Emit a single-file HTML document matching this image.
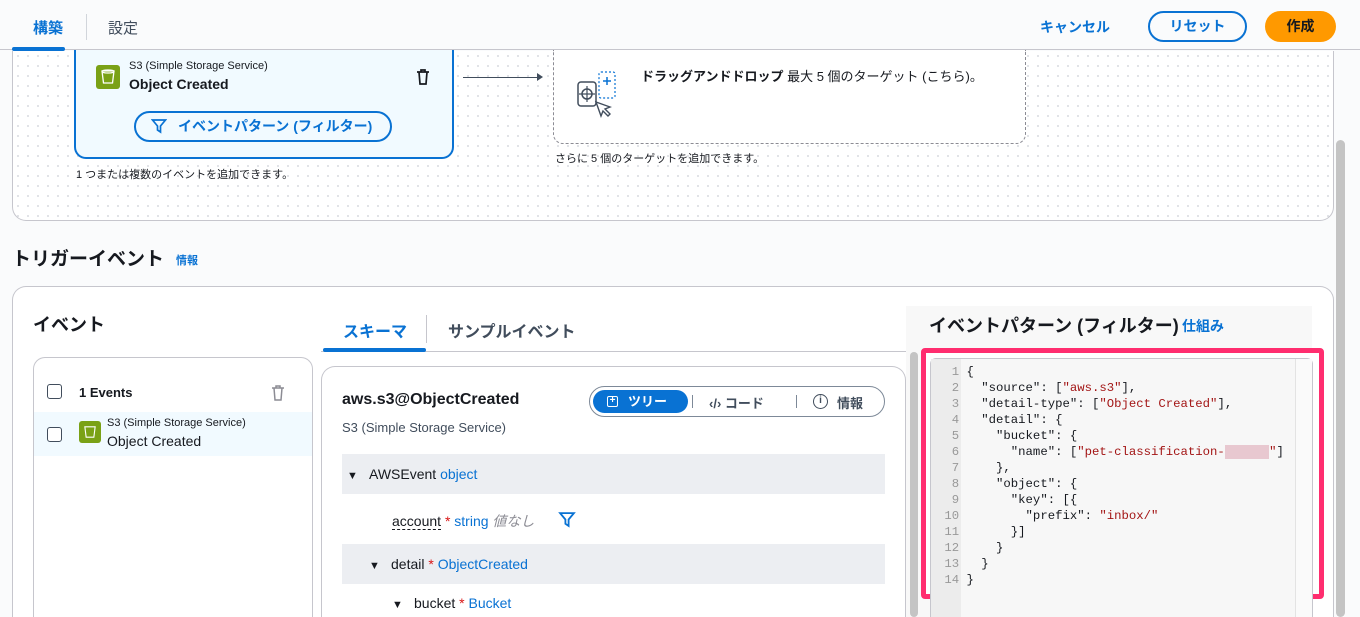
<!DOCTYPE html>
<html style="overflow:hidden;width:1360px;height:617px"><head><meta charset="utf-8"><style>
*{box-sizing:border-box;margin:0;padding:0}
body{width:1360px;height:617px;overflow:hidden;background:#fafbfc;font-family:"Liberation Sans","Noto Sans CJK JP",sans-serif;color:#16191f;position:relative;font-size:14px}
.a{position:absolute}
.blue{color:#0972d3}
.dots{background-image:radial-gradient(#dfe1e5 1px,transparent 1.2px);background-size:10px 10px}
.mono{font-family:"Liberation Mono","DejaVu Sans Mono",monospace}
.tri{font-size:11px;display:inline-block;width:22px}
</style></head><body>
<div class="a" style="left:0;top:0;width:1360px;height:50px;border-bottom:1px solid #c6c6cd;background:#fafbfc"></div>
<div class="a blue" style="left:33px;top:17px;font-size:15px;font-weight:bold">構築</div>
<div class="a" style="left:86px;top:14px;width:1px;height:26px;background:#d1d5db"></div>
<div class="a" style="left:108px;top:17px;font-size:15px;color:#414d5c">設定</div>
<div class="a" style="left:12px;top:47px;width:53px;height:4px;background:#0972d3;border-radius:2px"></div>
<div class="a blue" style="left:1040px;top:17px;font-size:14px;font-weight:bold">キャンセル</div>
<div class="a blue" style="left:1148px;top:11px;width:99px;height:31px;border:2px solid #0972d3;border-radius:16px;text-align:center;line-height:27px;font-weight:bold">リセット</div>
<div class="a" style="left:1265px;top:11px;width:71px;height:31px;background:#ff9900;border-radius:16px;text-align:center;line-height:31px;font-weight:bold">作成</div>
<div class="a" style="left:1336px;top:140px;width:9px;height:477px;background:#c4c4c4;border-radius:5px"></div>
<div class="a dots" style="left:12px;top:51px;width:1322px;height:170px;border:1px solid #c6c6cd;border-top:none;border-radius:0 0 14px 14px;background-color:#fff"></div>
<div class="a" style="left:74px;top:50px;width:380px;height:109px;background:#f1faff;border:2px solid #0972d3;border-top:none;border-radius:0 0 12px 12px"></div>
<div class="a" style="left:96px;top:65px;width:24px;height:24px;background:#7aa116;border-radius:3px"></div>
<svg class="a" style="left:101px;top:69px" width="14" height="16" viewBox="0 0 14 16"><path d="M1 2h12l-1.5 12h-9z" fill="none" stroke="#fff" stroke-width="1.3"/><ellipse cx="7" cy="2.5" rx="6" ry="1.5" fill="none" stroke="#fff" stroke-width="1.2"/></svg>
<div class="a" style="left:129px;top:60px;font-size:11px">S3 (Simple Storage Service)</div>
<div class="a" style="left:129px;top:76px;font-size:14px;font-weight:bold">Object Created</div>
<svg class="a" style="left:416px;top:69px" width="14" height="16" viewBox="0 0 14 16"><path d="M1 3h12M5 3V1h4v2M3 3l1 12h6l1-12" fill="none" stroke="#16191f" stroke-width="1.7"/></svg>
<div class="a blue" style="left:134px;top:111px;width:258px;height:31px;border:2px solid #0972d3;border-radius:16px;font-weight:bold;font-size:14px;line-height:27px;padding-left:42px">イベントパターン (フィルター)</div>
<svg class="a" style="left:151px;top:118px" width="16" height="16" viewBox="0 0 16 16"><path d="M1.5 2h13l-5 6v6l-3-2V8z" fill="none" stroke="#0972d3" stroke-width="1.7"/></svg>
<div class="a" style="left:76px;top:166px;font-size:11px;color:#16191f">1 つまたは複数のイベントを追加できます。</div>
<div class="a" style="left:463px;top:77px;width:78px;height:1px;background:#414d5c"></div>
<div class="a" style="left:537px;top:73px;border-left:6px solid #414d5c;border-top:4px solid transparent;border-bottom:4px solid transparent"></div>
<div class="a" style="left:553px;top:50px;width:473px;height:94px;border:1px dashed #8c8c94;border-top:none;border-radius:0 0 10px 10px;background:#fff"></div>
<svg class="a" style="left:576px;top:70px" width="52" height="50" viewBox="0 0 52 50"><rect x="2" y="12" width="18" height="24" rx="3" fill="none" stroke="#414d5c" stroke-width="1.5"/><circle cx="11" cy="24" r="5" fill="none" stroke="#414d5c" stroke-width="1.5"/><path d="M11 16v16M3 24h16" stroke="#414d5c" stroke-width="1.2"/><rect x="23" y="2" width="16" height="26" rx="2" fill="none" stroke="#0972d3" stroke-width="1.2" stroke-dasharray="2 2"/><path d="M31 7v8M27 11h8" stroke="#0972d3" stroke-width="1.5"/><path d="M20 32l5 14 2-5 5 5 2-2-5-5 5-2z" fill="#fff" stroke="#414d5c" stroke-width="1.4"/></svg>
<div class="a" style="left:641px;top:66px;font-size:13px"><b>ドラッグアンドドロップ</b> 最大 5 個のターゲット (こちら)。</div>
<div class="a" style="left:555px;top:150px;font-size:11px">さらに 5 個のターゲットを追加できます。</div>
<div class="a" style="left:12px;top:244px;font-size:19px;font-weight:bold">トリガーイベント</div>
<div class="a blue" style="left:176px;top:252px;font-size:11px;font-weight:bold">情報</div>
<div class="a" style="left:12px;top:286px;width:1322px;height:331px;border:1px solid #c6c6cd;border-bottom:none;border-radius:14px 14px 0 0;background:#fff"></div>
<div class="a" style="left:33px;top:311px;font-size:18px;font-weight:bold">イベント</div>
<div class="a" style="left:33px;top:357px;width:280px;height:260px;border:1px solid #c6c6cd;border-bottom:none;border-radius:12px 12px 0 0"></div>
<div class="a" style="left:47px;top:384px;width:15px;height:15px;border:1.5px solid #414d5c;border-radius:3px"></div>
<div class="a" style="left:79px;top:385px;font-size:13px;font-weight:bold">1 Events</div>
<svg class="a" style="left:271px;top:385px" width="14" height="16" viewBox="0 0 14 16"><path d="M1 3h12M5 3V1h4v2M3 3l1 12h6l1-12" fill="none" stroke="#8c8c94" stroke-width="1.5"/></svg>
<div class="a" style="left:34px;top:412px;width:278px;height:44px;background:#f1faff"></div>
<div class="a" style="left:47px;top:427px;width:15px;height:15px;border:1.5px solid #414d5c;border-radius:3px;background:#fff"></div>
<div class="a" style="left:79px;top:421px;width:22px;height:22px;background:#7aa116;border-radius:3px"></div>
<svg class="a" style="left:84px;top:425px" width="12" height="14" viewBox="0 0 14 16"><path d="M1 2h12l-1.5 12h-9z" fill="none" stroke="#fff" stroke-width="1.3"/></svg>
<div class="a" style="left:107px;top:417px;font-size:11px">S3 (Simple Storage Service)</div>
<div class="a" style="left:107px;top:433px;font-size:14px">Object Created</div>
<div class="a" style="left:321px;top:351px;width:585px;height:1px;background:#c6c6cd"></div>
<div class="a blue" style="left:343px;top:318px;font-size:16px;font-weight:bold">スキーマ</div>
<div class="a" style="left:426px;top:315px;width:1px;height:28px;background:#c6c6cd"></div>
<div class="a" style="left:448px;top:318px;font-size:16px;font-weight:bold;color:#414d5c">サンプルイベント</div>
<div class="a" style="left:323px;top:348px;width:103px;height:4px;background:#0972d3;border-radius:2px"></div>
<div class="a" style="left:321px;top:366px;width:585px;height:251px;border:1px solid #c6c6cd;border-bottom:none;border-radius:14px 14px 0 0"></div>
<div class="a" style="left:342px;top:391px;font-size:16px;font-weight:bold">aws.s3@ObjectCreated</div>
<div class="a" style="left:342px;top:420px;font-size:13px;color:#414d5c">S3 (Simple Storage Service)</div>
<div class="a" style="left:589px;top:386px;width:296px;height:31px;border:1px solid #7d8998;border-radius:16px"></div>
<div class="a" style="left:593px;top:390px;width:95px;height:23px;background:#0972d3;border-radius:12px;color:#fff;font-weight:bold;font-size:13px;line-height:23px;padding-left:35px">ツリー</div>
<div class="a" style="left:607px;top:396px;width:11px;height:11px;border:1.5px solid #fff;border-radius:2px;color:#fff;font-size:10px;line-height:8px;text-align:center;font-weight:bold">+</div>
<div class="a" style="left:692px;top:395px;width:1px;height:13px;background:#7d8998"></div>
<div class="a" style="left:709px;top:393px;font-size:13px;font-weight:bold;color:#414d5c">‹/› コード</div>
<div class="a" style="left:796px;top:395px;width:1px;height:13px;background:#7d8998"></div>
<div class="a" style="left:813px;top:394px;width:15px;height:15px;border:1.5px solid #414d5c;border-radius:50%;font-size:10px;text-align:center;line-height:12px;font-weight:bold;color:#414d5c">i</div>
<div class="a" style="left:837px;top:393px;font-size:13px;font-weight:bold;color:#414d5c">情報</div>
<div class="a" style="left:342px;top:454px;width:543px;height:40px;background:#eceef2"></div>
<div class="a" style="left:347px;top:466px;font-size:14px"><span class="tri">▼</span>AWSEvent <span class="blue">object</span></div>
<div class="a" style="left:392px;top:511px;font-size:14px"><span style="border-bottom:1px dashed #16191f">account</span> <span style="color:#d91515">*</span> <span class="blue">string</span> <i style="color:#8c8c94">値なし</i></div>
<svg class="a" style="left:558px;top:511px" width="18" height="17" viewBox="0 0 16 16"><path d="M1.5 2h13l-5 6v6l-3-2V8z" fill="none" stroke="#0972d3" stroke-width="1.7"/></svg>
<div class="a" style="left:342px;top:544px;width:543px;height:40px;background:#eceef2"></div>
<div class="a" style="left:369px;top:556px;font-size:14px"><span class="tri">▼</span>detail <span style="color:#d91515">*</span> <span class="blue">ObjectCreated</span></div>
<div class="a" style="left:392px;top:595px;font-size:14px"><span class="tri">▼</span>bucket <span style="color:#d91515">*</span> <span class="blue">Bucket</span></div>
<div class="a" style="left:906px;top:306px;width:406px;height:311px;background:#f8f8f8"></div>
<div class="a" style="left:910px;top:352px;width:8px;height:265px;background:#c4c4c4;border-radius:4px"></div>
<div class="a" style="left:929px;top:312px;font-size:18px;font-weight:bold">イベントパターン (フィルター)</div>
<div class="a blue" style="left:1182px;top:316px;font-size:14px;font-weight:bold">仕組み</div>
<div class="a" style="left:921px;top:348px;width:403px;height:251px;border:5px solid #ff2d6f;border-radius:4px;background:#fff"></div>
<div class="a" style="left:930px;top:358px;width:383px;height:259px;border:1px solid #c6c6cd;border-bottom:none;border-radius:6px 6px 0 0;background:#f7f7f7"></div>
<div class="a" style="left:931px;top:359px;width:30px;height:258px;background:#ececec"></div>
<div class="a" style="left:1295px;top:359px;width:17px;height:258px;background:#fafafa;border-left:1px solid #e3e3e3"></div>
<pre class="a mono" style="left:937px;top:364px;font-size:12.3px;line-height:16px;color:#16191f"><span style="color:#999">  1</span> {
<span style="color:#999">  2</span>   "source": [<span style="color:#a31515">"aws.s3"</span>],
<span style="color:#999">  3</span>   "detail-type": [<span style="color:#a31515">"Object Created"</span>],
<span style="color:#999">  4</span>   "detail": {
<span style="color:#999">  5</span>     "bucket": {
<span style="color:#999">  6</span>       "name": [<span style="color:#a31515">"pet-classification-<span style="background:#e8c8d0;color:#e8c8d0">xxxxxx</span>"</span>]
<span style="color:#999">  7</span>     },
<span style="color:#999">  8</span>     "object": {
<span style="color:#999">  9</span>       "key": [{
<span style="color:#999"> 10</span>         "prefix": <span style="color:#a31515">"inbox/"</span>
<span style="color:#999"> 11</span>       }]
<span style="color:#999"> 12</span>     }
<span style="color:#999"> 13</span>   }
<span style="color:#999"> 14</span> }</pre>
</body></html>
